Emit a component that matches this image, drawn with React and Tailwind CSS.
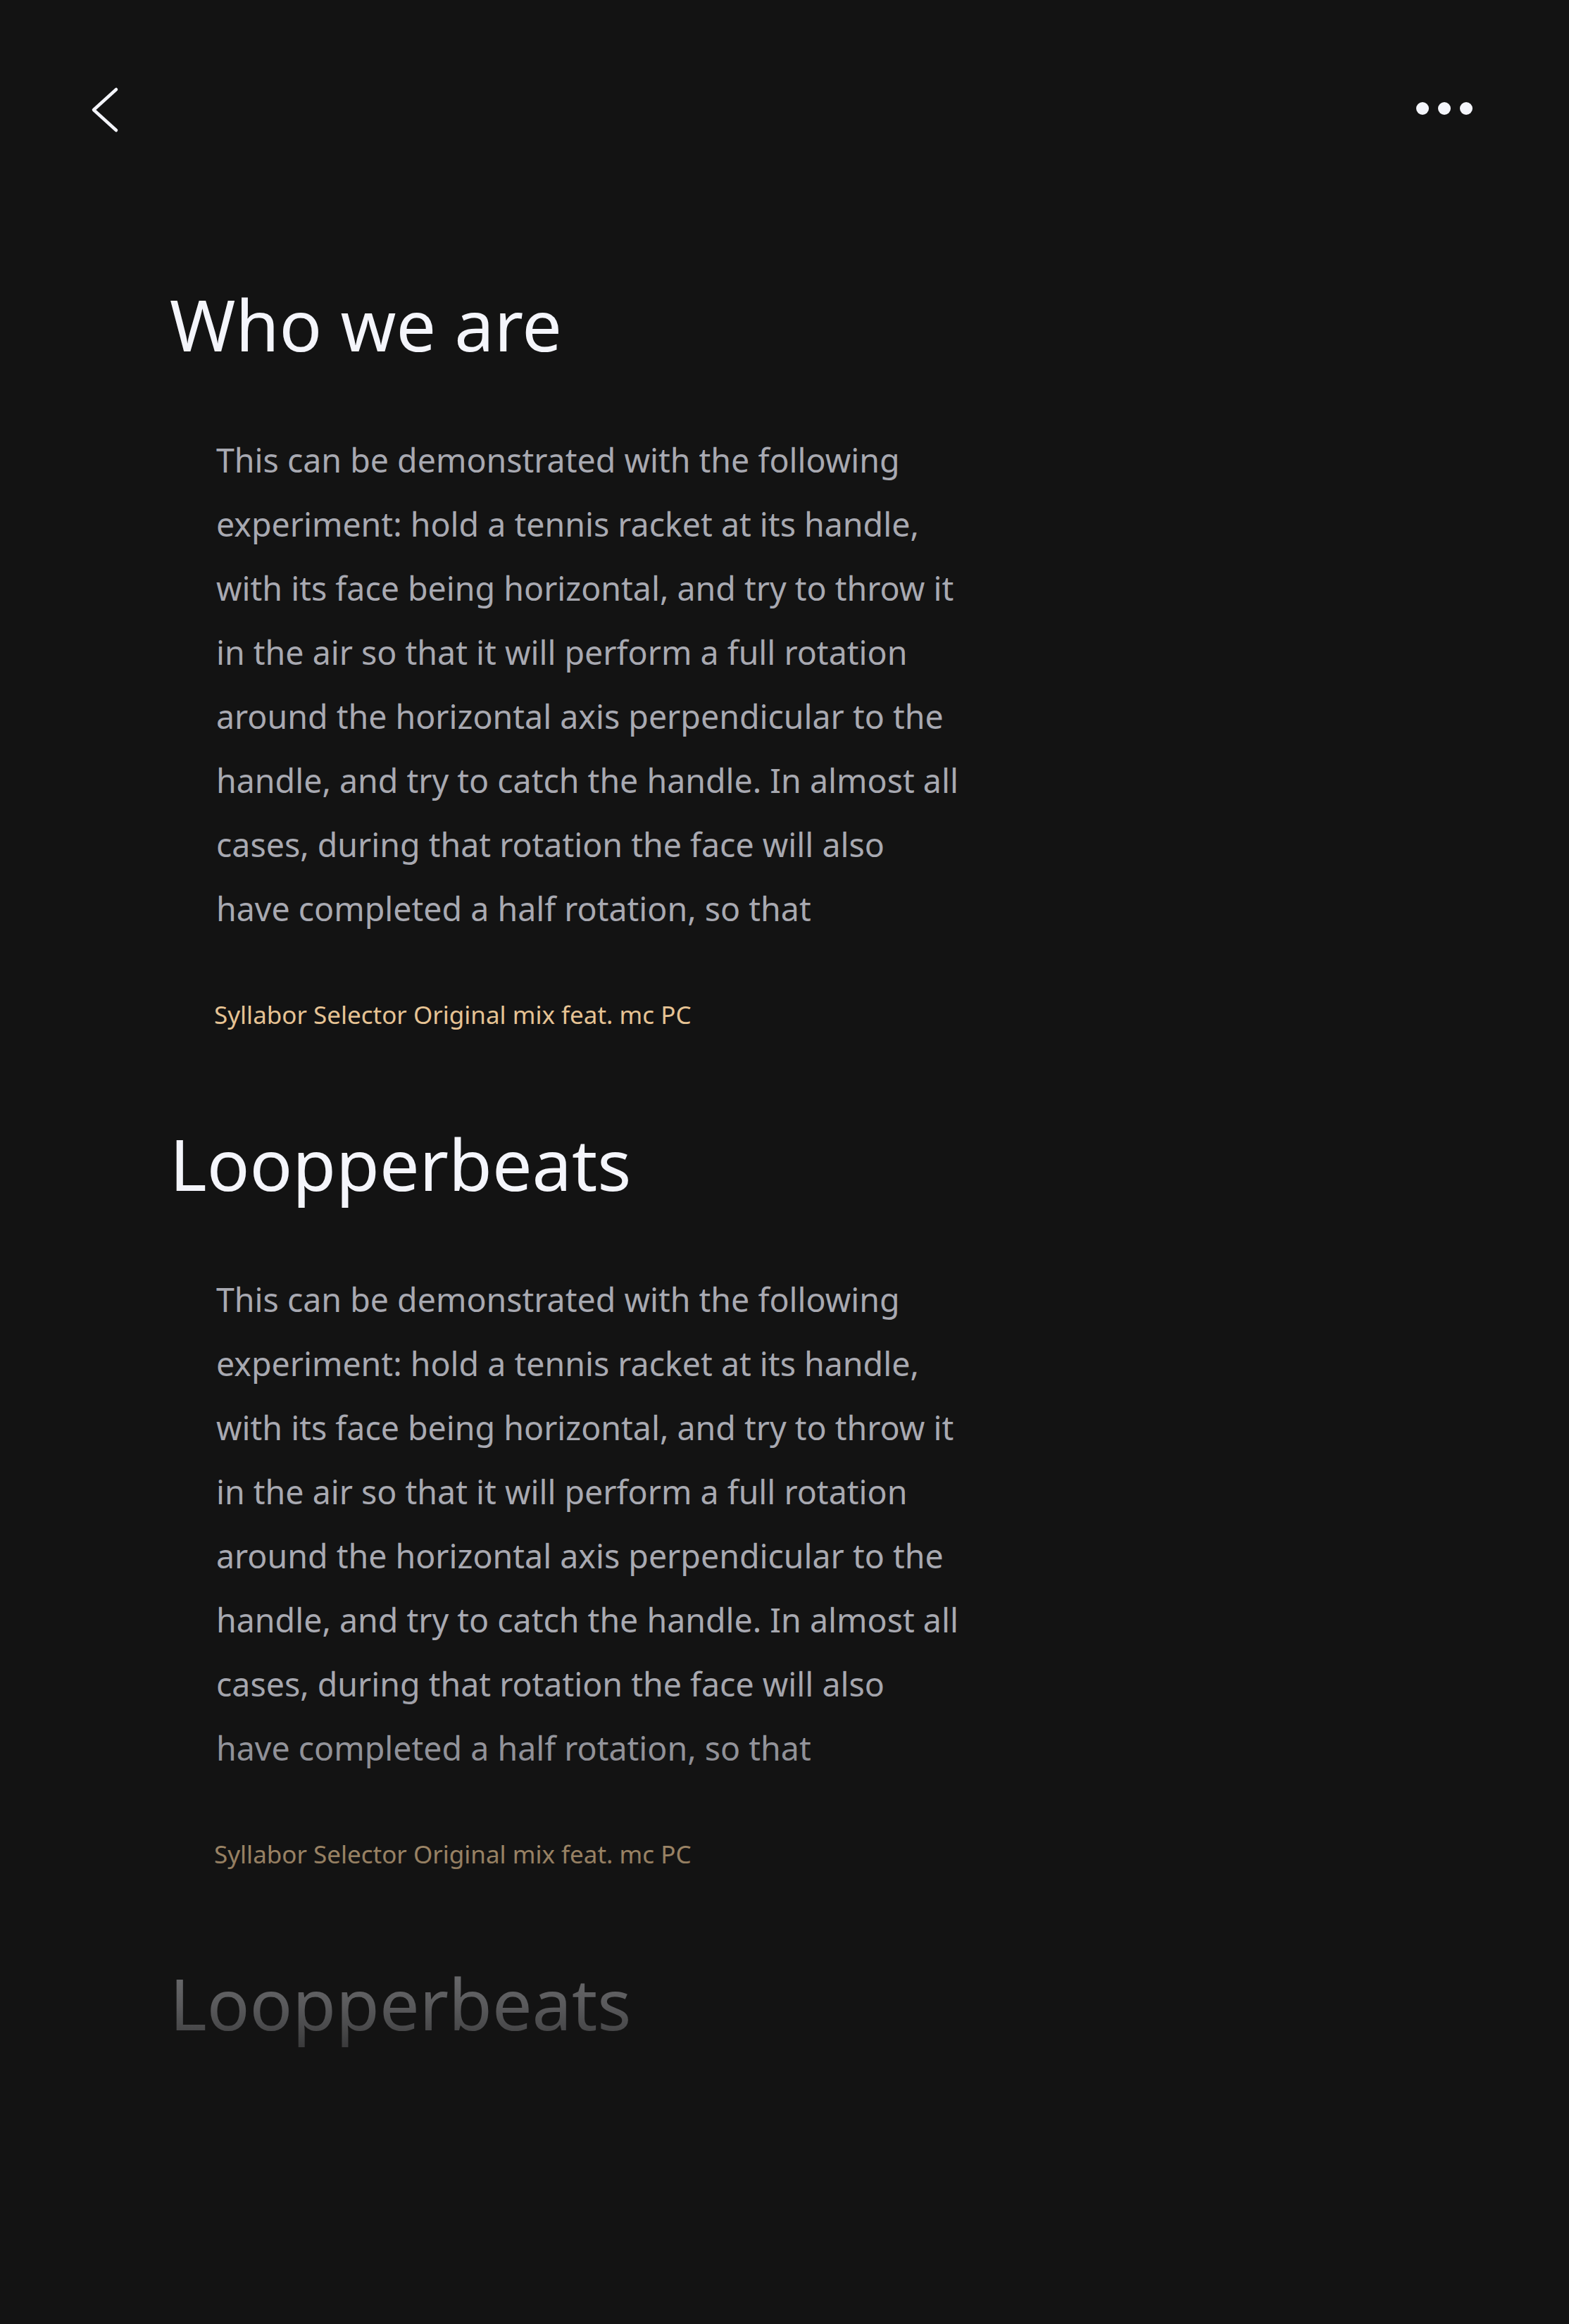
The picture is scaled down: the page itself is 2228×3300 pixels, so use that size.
const BODY_LINES = [
  'This can be demonstrated with the following',
  'experiment: hold a tennis racket at its handle,',
  'with its face being horizontal, and try to throw it',
  'in the air so that it will perform a full rotation',
  'around the horizontal axis perpendicular to the',
  'handle, and try to catch the handle. In almost all',
  'cases, during that rotation the face will also',
  'have completed a half rotation, so that',
]

const SECTIONS = [
  { title: 'Who we are', caption: 'Syllabor Selector Original mix feat. mc PC' },
  { title: 'Loopperbeats', caption: 'Syllabor Selector Original mix feat. mc PC' },
  { title: 'Loopperbeats' },
]

function BackIcon() {
  return (
    <svg width="40" height="66" viewBox="0 0 40 66" fill="none">
      <polyline
        points="36,4 4,33 36,62"
        stroke="#f4f5fb"
        strokeWidth="4.5"
        strokeLinecap="round"
        strokeLinejoin="round"
      />
    </svg>
  )
}

function Section({ title, caption, first }) {
  return (
    <section className={first ? '' : 'mt-[136px]'}>
      <h2 className="text-[100.5px] leading-[100px] font-normal text-[#f4f5fb]">{title}</h2>
      {caption && (
        <>
          <p className="ml-[66px] mt-[98px] text-[46.5px] leading-[91px] text-[#a8a9b1]">
            {BODY_LINES.map((line, i) => (
              <span key={i} className="block whitespace-nowrap">
                {line}
              </span>
            ))}
          </p>
          <p className="ml-[63px] mt-[79px] text-[35px] leading-[51px] text-[#e6c394]">{caption}</p>
        </>
      )}
    </section>
  )
}

export default function App() {
  return (
    <div className="relative h-[3300px] w-full overflow-hidden bg-[#131313] font-['Noto_Sans',sans-serif]">
      <header className="flex items-center justify-between pl-[129px] pr-[137px] pt-[123px]">
        <button className="block">
          <BackIcon />
        </button>
        <button className="-mt-1 flex items-center gap-[13px]">
          <span className="h-[18px] w-[18px] rounded-full bg-[#f4f5fb]" />
          <span className="h-[18px] w-[18px] rounded-full bg-[#f4f5fb]" />
          <span className="h-[18px] w-[18px] rounded-full bg-[#f4f5fb]" />
        </button>
      </header>

      <main className="pl-[241px] pt-[221px]">
        {SECTIONS.map((s, i) => (
          <Section key={i} title={s.title} caption={s.caption} first={i === 0} />
        ))}
      </main>

      <div className="pointer-events-none absolute inset-x-0 top-[2380px] h-[920px] bg-[linear-gradient(to_bottom,rgba(19,19,19,0)_0px,rgba(19,19,19,0.69)_470px,#131313_600px)]" />
    </div>
  )
}
